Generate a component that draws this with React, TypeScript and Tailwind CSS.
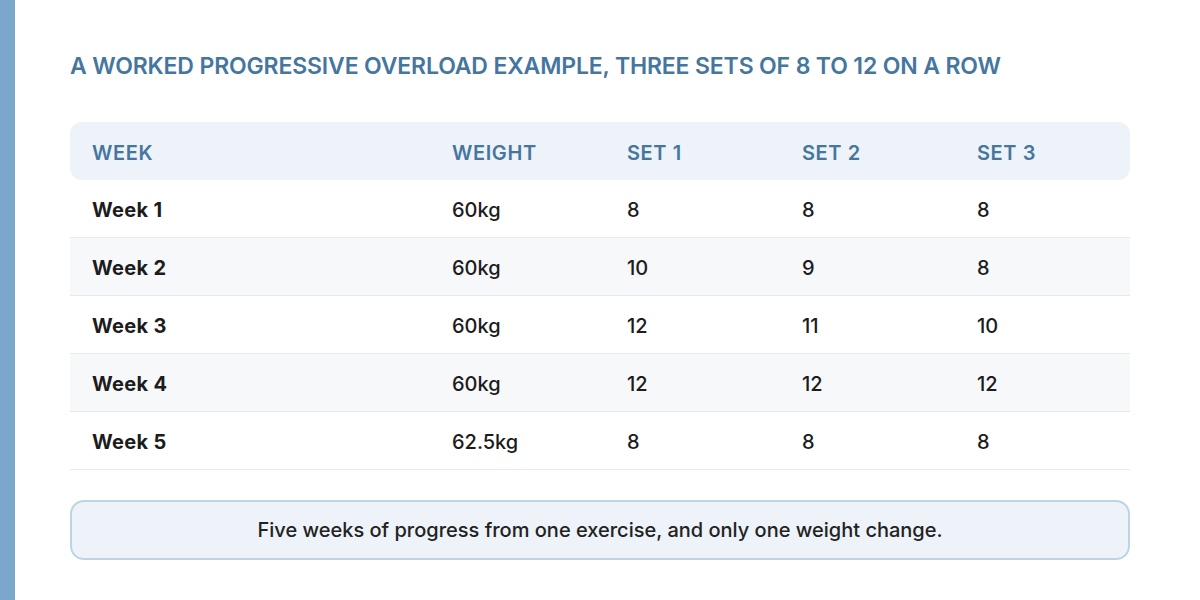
import React from "react";

const rows = [
  ["Week 1", "60kg", "8", "8", "8"],
  ["Week 2", "60kg", "10", "9", "8"],
  ["Week 3", "60kg", "12", "11", "10"],
  ["Week 4", "60kg", "12", "12", "12"],
  ["Week 5", "62.5kg", "8", "8", "8"],
];

export default function App() {
  return (
    <div
      className="w-[1200px] h-[600px] bg-white flex overflow-hidden"
      style={{ fontFamily: "Inter, 'Noto Sans', sans-serif" }}
    >
      <div className="w-[15px] h-full bg-[#7aa7cb] shrink-0" />
      <div className="flex-1 pl-[55px] pr-[55px] pt-[50px]">
        <h1 className="text-[23px] leading-[32px] font-semibold text-[#4576a0] tracking-[-0.15px]">
          A WORKED PROGRESSIVE OVERLOAD EXAMPLE, THREE SETS OF 8 TO 12 ON A ROW
        </h1>
        <div className="mt-[40px] w-[1060px]">
          <div className="grid grid-cols-[360px_175px_175px_175px_175px] h-[58px] items-center bg-[#edf3f8] rounded-[12px] text-[20px] font-semibold text-[#4576a0] tracking-[0.6px] pt-[3px]">
            {["WEEK", "WEIGHT", "SET 1", "SET 2", "SET 3"].map((h) => (
              <div key={h} className="pl-[22px]">{h}</div>
            ))}
          </div>
          {rows.map((r, i) => (
            <div
              key={i}
              className={`grid grid-cols-[360px_175px_175px_175px_175px] h-[58px] items-center border-b border-[#e6e9ee] text-[20px] text-[#1c1c1c] pt-[3px] ${i % 2 === 1 ? "bg-[#f7f8fa]" : "bg-white"}`}
            >
              {r.map((c, j) => (
                <div key={j} className={`pl-[22px] ${j === 0 ? "font-bold tracking-[0.3px]" : "font-medium"}`}>{c}</div>
              ))}
            </div>
          ))}
        </div>
        <div className="mt-[30px] w-[1060px] h-[60px] rounded-[14px] border-2 border-[#bcd5e4] bg-[#edf3f8] flex items-center justify-center text-[20px] font-medium text-[#222]">
          Five weeks of progress from one exercise, and only one weight change.
        </div>
      </div>
    </div>
  );
}
